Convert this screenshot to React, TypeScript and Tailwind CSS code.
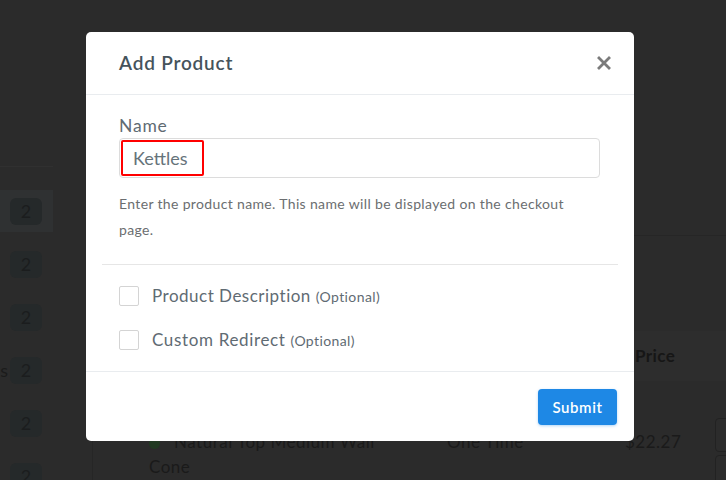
import React from "react";

const badgeRows = [
  { highlight: true, prefix: "" },
  { highlight: false, prefix: "" },
  { highlight: false, prefix: "" },
  { highlight: false, prefix: "s" },
  { highlight: false, prefix: "" },
  { highlight: false, prefix: "" },
];

const CloseIcon: React.FC = () => (
  <svg width="14" height="14" viewBox="0 0 14 14" fill="none">
    <path d="M2 2L12 12M12 2L2 12" stroke="#7b7b7b" strokeWidth="2.8" strokeLinecap="square" />
  </svg>
);

const OptionRow: React.FC<{ label: string; tracking: string }> = ({ label, tracking }) => (
  <label className="flex h-[44px] items-center">
    <span className="size-[20px] rounded-[2px] border border-[#d4d4d4] bg-white" />
    <span className={`ml-[13px] text-[17px] text-[#5f6b73] ${tracking}`}>
      {label} <span className="text-[14px] tracking-[0.4px]">(Optional)</span>
    </span>
  </label>
);

const Background: React.FC = () => (
  <div className="flex h-full w-full">
    {/* sidebar */}
    <div className="w-[53px] shrink-0 pt-[166px]">
      <div className="flex flex-col gap-[11px] border-t border-[#303030] pt-[23px]">
        {badgeRows.map((row, i) => (
          <div
            key={i}
            className={`flex h-[42px] items-center justify-end gap-[2px] pr-[11px] ${
              row.highlight ? "bg-[#2f3132]" : ""
            }`}
          >
            {row.prefix && <span className="text-[18px] text-[#1b1b1b]">{row.prefix}</span>}
            <span className="flex h-[27px] w-[32px] items-center justify-center rounded-md bg-[#25292a] text-[18px] text-[#1b1d1e]">
              2
            </span>
          </div>
        ))}
      </div>
    </div>

    {/* main */}
    <div className="flex-1 pl-[39px] pt-[235px]">
      <div className="h-full border-l border-t border-[#262626]">
        <div className="h-[95px]" />
        <div className="flex h-[50px] items-center bg-[#2d2d2d] text-[17px] font-bold text-[#161616]">
          <div className="w-[542px] shrink-0" />
          <div className="tracking-[0.4px]">Price</div>
        </div>
        <div className="flex pt-[48px] text-[17px] leading-[25px] tracking-[0.5px] text-[#1a1a1a]">
          <div className="w-[354px] shrink-0 pl-[56px]">
            <span className="mr-[14px] inline-block size-[11px] rounded-full bg-[#213a22] align-middle" />
            Natural Top Medium Wall
            <br />
            Cone
          </div>
          <div className="w-[178px] shrink-0">One Time</div>
          <div className="w-[90px] shrink-0">$22.27</div>
          <div className="-mt-[11px] flex flex-col gap-[3px]">
            <div className="h-[34px] w-[40px] rounded-[4px] border border-[#222] bg-[#2c2c2c]" />
            <div className="h-[34px] w-[40px] rounded-[4px] border border-[#222] bg-[#2c2c2c]" />
          </div>
        </div>
      </div>
    </div>
  </div>
);

export default function App() {
  return (
    <div
      className="relative h-[480px] w-[726px] overflow-hidden bg-[#2b2b2b]"
      style={{ fontFamily: "Lato, 'Open Sans', sans-serif" }}
    >
      <Background />

      {/* modal */}
      <div className="absolute left-[86px] top-[32px] flex h-[409px] w-[548px] flex-col rounded-[5px] bg-white">
        <div className="flex h-[63px] shrink-0 items-center justify-between border-b border-[#e9ecef] pl-[33px] pr-[20px]">
          <h2 className="text-[19px] font-semibold tracking-[0.8px] text-[#45535b]">Add Product</h2>
          <button className="flex size-[20px] items-center justify-center">
            <CloseIcon />
          </button>
        </div>

        <div className="px-[33px] pb-[21px] pt-[20px]">
          <div className="h-[23px] text-[17.5px] leading-[22px] tracking-[0.8px] text-[#5f6b73]">Name</div>
          <div className="flex h-[40px] w-[481px] items-center rounded-[4px] border border-[#dcdcdc] px-[1px]">
            <div className="flex h-[36px] w-[83px] items-center rounded-[2px] border-2 border-[#ff0000] pl-[10px] text-[18px] text-[#66737a]">
              Kettles
            </div>
          </div>
          <p className="mt-[13px] w-[470px] text-[14px] leading-[26px] tracking-[0.35px] text-[#6b6e70]">
            Enter the product name. This name will be displayed on the checkout page.
          </p>
        </div>

        <div className="mx-[16px] border-t border-[#e6e6e6]" />

        <div className="px-[33px] pb-[9px] pt-[9px]">
          <OptionRow label="Product Description" tracking="tracking-[0.5px]" />
          <OptionRow label="Custom Redirect" tracking="tracking-[0.65px]" />
        </div>

        <div className="flex flex-1 items-start justify-end border-t border-[#e9ecef] pr-[17px] pt-[17px]">
          <button className="h-[36px] w-[79px] rounded-[4px] bg-[#1e88e5] text-[15px] font-semibold tracking-[0.6px] text-white shadow-[0_1px_3px_rgba(30,136,229,0.35)]">
            Submit
          </button>
        </div>
      </div>
    </div>
  );
}
